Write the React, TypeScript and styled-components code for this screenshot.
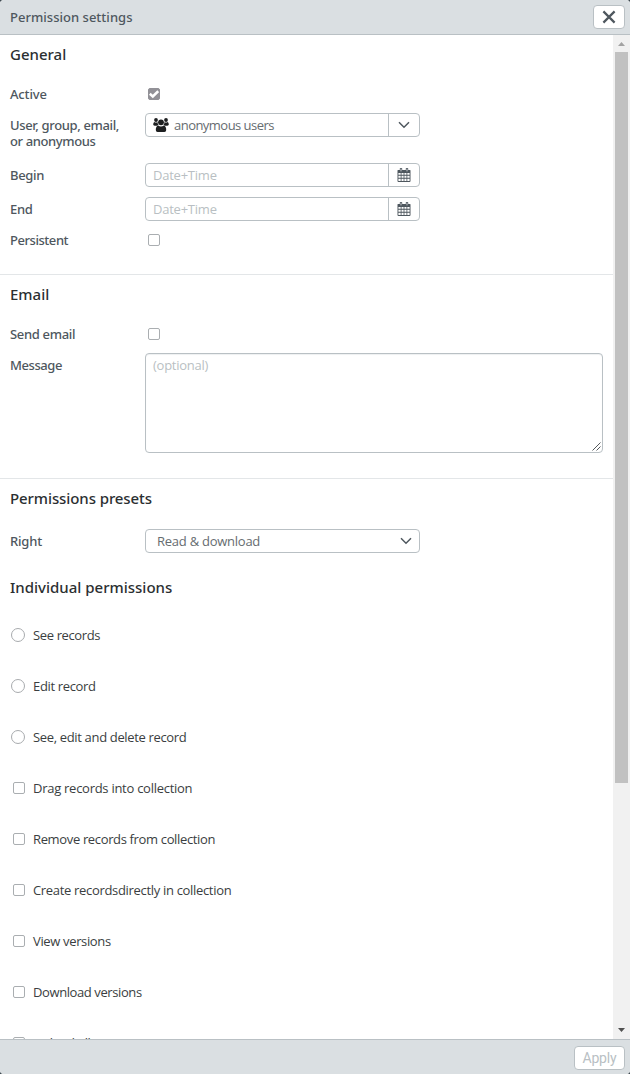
import React from "react";
import styled, { createGlobalStyle, css } from "styled-components";

const Global = createGlobalStyle`
  * { box-sizing: border-box; }
  html, body { margin: 0; height: 100%; overflow: hidden; }
  body { background: #3f4a52; font-family: "Open Sans", "Noto Sans", sans-serif; font-size: 13px; }
`;

const line = "#b9c0c4";
const slate = "#4e575e";

const Dialog = styled.div`
  width: 630px;
  height: 1074px;
  display: flex;
  flex-direction: column;
  border-radius: 4px;
  overflow: hidden;
  background: #fff;
`;

const Bar = styled.header`
  height: 35px;
  flex: none;
  display: flex;
  align-items: center;
  justify-content: space-between;
  padding: 0 5px 1px 10px;
  background: #dadfe2;
  border-bottom: 1px solid ${line};
`;

const Footer = styled(Bar).attrs({ as: "footer" })`
  justify-content: flex-end;
  padding: 1px 5px 0 10px;
  border-bottom: 0;
  border-top: 1px solid ${line};
`;

const Text = styled.span<{ $w: number }>`
  display: block;
  white-space: nowrap;
  letter-spacing: ${(p) => p.$w}px;
`;

const Title = styled.h1`
  margin: 0;
  font-family: "Noto Sans", "Open Sans", sans-serif;
  font-size: 13px;
  line-height: 18px;
  font-weight: 500;
  color: ${slate};
`;

const Button = styled.button<{ $width: number }>`
  width: ${(p) => p.$width}px;
  height: 24px;
  display: flex;
  align-items: center;
  justify-content: center;
  padding: 0;
  background: #fff;
  border: 1px solid ${line};
  border-radius: 4px;
  color: #b9bfc4;
  font: 400 14px/18px Roboto, sans-serif;
`;

const Body = styled.div`
  flex: 1;
  min-height: 0;
  display: flex;
`;

const Content = styled.main`
  flex: 1;
  min-width: 0;
  overflow: hidden;
`;

const Section = styled.section<{ $height: number; $rule?: boolean }>`
  height: ${(p) => p.$height}px;
  padding: 9px 10px 0;
  ${(p) => p.$rule && css`border-bottom: 1px solid #e3e6e8;`}
`;

const Heading = styled.h2<{ $gap: number }>`
  margin: 0 0 ${(p) => p.$gap}px;
  font-family: "Noto Sans", "Open Sans", sans-serif;
  font-size: 15px;
  line-height: 20px;
  font-weight: 500;
  color: #2b2f31;
`;

const Row = styled.div<{ $height: number }>`
  height: ${(p) => p.$height}px;
  display: flex;
  align-items: flex-start;
`;

const Label = styled.label`
  width: 135px;
  flex: none;
  padding-top: 4px;
  font-family: "Noto Sans", "Open Sans", sans-serif;
  line-height: 16px;
  font-weight: 500;
  color: ${slate};
`;

const Check = styled.span<{ $on?: boolean }>`
  width: 12px;
  height: 12px;
  flex: none;
  display: flex;
  border: 1px solid ${(p) => (p.$on ? "#929197" : "#aaaeb1")};
  border-radius: 2px;
  background: ${(p) => (p.$on ? "#929197" : "#fff")};
`;

const CheckCell = styled.div`
  padding: 6px 0 0 3px;
`;

const Field = styled.div<{ $inset?: number }>`
  width: 275px;
  height: 24px;
  display: flex;
  align-items: center;
  border: 1px solid ${line};
  border-radius: 4px;
  padding-left: ${(p) => p.$inset ?? 7}px;
  color: #666c70;
  line-height: 18px;
  font-weight: 400;
`;

const Value = styled.div<{ $faint?: boolean }>`
  flex: 1;
  display: flex;
  align-items: center;
  gap: 5px;
  color: ${(p) => (p.$faint ? "#b9bfc3" : "inherit")};
`;

const Addon = styled.div`
  width: 31px;
  height: 22px;
  flex: none;
  display: flex;
  align-items: center;
  justify-content: center;
  border-left: 1px solid ${line};
`;

const Arrow = styled.div`
  width: 26px;
  display: flex;
  justify-content: center;
`;

const Area = styled.div`
  width: 458px;
  height: 100px;
  display: flex;
  justify-content: space-between;
  border: 1px solid ${line};
  border-radius: 4px;
  padding: 2px 0 0 7px;
  line-height: 18px;
  color: #b9bfc3;
  box-shadow: inset 0 1px 1px #eef0f1;
`;

const Grip = styled.svg`
  align-self: flex-end;
  margin: 0 1px 1px 0;
`;

const Options = styled.ul`
  margin: 0;
  padding: 0;
  list-style: none;
`;

const Option = styled.li`
  height: 51px;
  display: flex;
  align-items: center;
  color: #3a3e41;
  font-weight: 400;
`;

const Marker = styled.div<{ $round?: boolean }>`
  width: 23px;
  display: flex;
  padding-left: ${(p) => (p.$round ? 1 : 3)}px;
`;

const Radio = styled.span`
  width: 14px;
  height: 14px;
  border: 1px solid #a8abae;
  border-radius: 50%;
`;

const Track = styled.div`
  width: 17px;
  flex: none;
  display: flex;
  flex-direction: column;
  align-items: center;
  justify-content: space-between;
  background: #f1f1f1;
`;

const Thumb = styled.div`
  width: 13px;
  height: 731px;
  background: #c1c1c1;
`;

const ScrollArrow = styled.svg`
  display: block;
  width: 17px;
  height: 17px;
`;

const Spacer = styled.div`
  flex: 1;
`;

const CloseIcon = () => (
  <svg width="14" height="14" viewBox="0 0 14 14" fill="none" stroke={slate} strokeWidth="2.2">
    <path d="M1.4 1.4 12.6 12.6M12.6 1.4 1.4 12.6" />
  </svg>
);

const Chevron = () => (
  <svg width="12" height="8" viewBox="0 0 12 8" fill="none" stroke={slate} strokeWidth="1.5">
    <path d="M1 1.2 6 6.2 11 1.2" />
  </svg>
);

const Tick = () => (
  <svg width="10" height="10" viewBox="0 0 10 10" fill="none" stroke="#fff" strokeWidth="2.5">
    <path d="M.8 4.8 3.8 7.5 9.2 2.2" />
  </svg>
);

const Users = () => (
  <svg width="16" height="14" viewBox="0 0 16 14" fill="#1d1f20">
    <circle cx="3" cy="2" r="1.9" />
    <circle cx="13" cy="2" r="1.9" />
    <circle cx="8" cy="4.3" r="2.9" />
    <path d="M1.3 4Q3 5 4.5 4Q4.5 6 5.6 7Q4.6 7.1 4 7.7H1.6Q.2 7.7 .2 6.6Q.2 4.5 1.3 4ZM14.7 4Q13 5 11.5 4Q11.5 6 10.4 7Q11.4 7.1 12 7.7H14.4Q15.8 7.7 15.8 6.6Q15.8 4.5 14.7 4ZM5.1 7.5Q8 9.4 10.9 7.5Q13.2 8.2 13.2 12Q13.2 13.9 11.4 13.9H4.6Q2.8 13.9 2.8 12Q2.8 8.2 5.1 7.5Z" />
  </svg>
);

const Calendar = () => (
  <svg width="14" height="14" viewBox="0 0 14 14">
    <path fill={slate} fillRule="evenodd" d="M1 2H13Q13.5 2 13.5 2.5V13Q13.5 14 12.5 14H1.5Q.5 14 .5 13V2.5Q.5 2 1 2ZM1.4 5V6.8H3.7V5ZM4.5 5V6.8H6.6V5ZM7.4 5V6.8H9.5V5ZM10.3 5V6.8H12.6V5ZM1.4 7.7V9.8H3.7V7.7ZM4.5 7.7V9.8H6.6V7.7ZM7.4 7.7V9.8H9.5V7.7ZM10.3 7.7V9.8H12.6V7.7ZM1.4 10.7V13H3.7V10.7ZM4.5 10.7V13H6.6V10.7ZM7.4 10.7V13H9.5V10.7ZM10.3 10.7V13H12.6V10.7Z" />
    <path d="M4 .9V3M10 .9V3" stroke={slate} strokeWidth="2.4" strokeLinecap="round" />
    <path d="M4 1V3M10 1V3" stroke="#c6cacd" strokeWidth="1" strokeLinecap="round" />
  </svg>
);

const DateField = () => (
  <Field>
    <Value $faint><Text $w={-0.23}>Date+Time</Text></Value>
    <Addon><Calendar /></Addon>
  </Field>
);

const options: { text: string; round?: boolean; spacing: number }[] = [
  { text: "See records", round: true, spacing: -0.37 },
  { text: "Edit record", round: true, spacing: -0.34 },
  { text: "See, edit and delete record", round: true, spacing: -0.34 },
  { text: "Drag records into collection", spacing: -0.27 },
  { text: "Remove records from collection", spacing: -0.35 },
  { text: "Create recordsdirectly in collection", spacing: -0.32 },
  { text: "View versions", spacing: -0.35 },
  { text: "Download versions", spacing: -0.4 },
  { text: "Upload all", spacing: -0.33 },
];

export default function App() {
  return (
    <>
      <Global />
      <Dialog>
        <Bar>
          <Title><Text $w={0.02}>Permission settings</Text></Title>
          <Button $width={32} aria-label="Close"><CloseIcon /></Button>
        </Bar>
        <Body>
          <Content>
            <Section $height={240} $rule>
              <Heading $gap={18}><Text $w={0}>General</Text></Heading>
              <Row $height={31}>
                <Label><Text $w={-0.15}>Active</Text></Label>
                <CheckCell><Check $on><Tick /></Check></CheckCell>
              </Row>
              <Row $height={50}>
                <Label><Text $w={-0.36}>User, group, email,</Text><Text $w={-0.38}>or anonymous</Text></Label>
                <Field>
                  <Value><Users /><Text $w={-0.53}>anonymous users</Text></Value>
                  <Addon><Chevron /></Addon>
                </Field>
              </Row>
              <Row $height={34}><Label><Text $w={-0.3}>Begin</Text></Label><DateField /></Row>
              <Row $height={31}><Label><Text $w={-0.3}>End</Text></Label><DateField /></Row>
              <Row $height={31}>
                <Label><Text $w={-0.45}>Persistent</Text></Label>
                <CheckCell><Check /></CheckCell>
              </Row>
            </Section>
            <Section $height={204} $rule>
              <Heading $gap={18}><Text $w={0}>Email</Text></Heading>
              <Row $height={31}>
                <Label><Text $w={-0.33}>Send email</Text></Label>
                <CheckCell><Check /></CheckCell>
              </Row>
              <Row $height={100}>
                <Label><Text $w={-0.42}>Message</Text></Label>
                <Area>
                  <Text $w={-0.25}>(optional)</Text>
                  <Grip width="9" height="9" viewBox="0 0 9 9" stroke="#55595c" fill="none">
                    <path d="M.5 8.5 8.5 .5M4.5 8.5 8.5 4.5" />
                  </Grip>
                </Area>
              </Row>
            </Section>
            <Section $height={89}>
              <Heading $gap={21}><Text $w={-0.09}>Permissions presets</Text></Heading>
              <Row $height={24}>
                <Label><Text $w={-0.2}>Right</Text></Label>
                <Field $inset={11}>
                  <Value><Text $w={-0.25}>Read &amp; download</Text></Value>
                  <Arrow><Chevron /></Arrow>
                </Field>
              </Row>
            </Section>
            <Section $height={520}>
              <Heading $gap={12}><Text $w={0}>Individual permissions</Text></Heading>
              <Options>
                {options.map((o) => (
                  <Option key={o.text}>
                    <Marker $round={o.round}>{o.round ? <Radio /> : <Check />}</Marker>
                    <Text $w={o.spacing}>{o.text}</Text>
                  </Option>
                ))}
              </Options>
            </Section>
          </Content>
          <Track>
            <ScrollArrow viewBox="0 0 17 17"><path d="M5 11 8.5 7 12 11Z" fill="#a3a3a3" /></ScrollArrow>
            <Thumb />
            <Spacer />
            <ScrollArrow viewBox="0 0 17 17"><path d="M5 6 8.5 10 12 6Z" fill="#505050" /></ScrollArrow>
          </Track>
        </Body>
        <Footer><Button $width={51}><Text $w={-0.15}>Apply</Text></Button></Footer>
      </Dialog>
    </>
  );
}
